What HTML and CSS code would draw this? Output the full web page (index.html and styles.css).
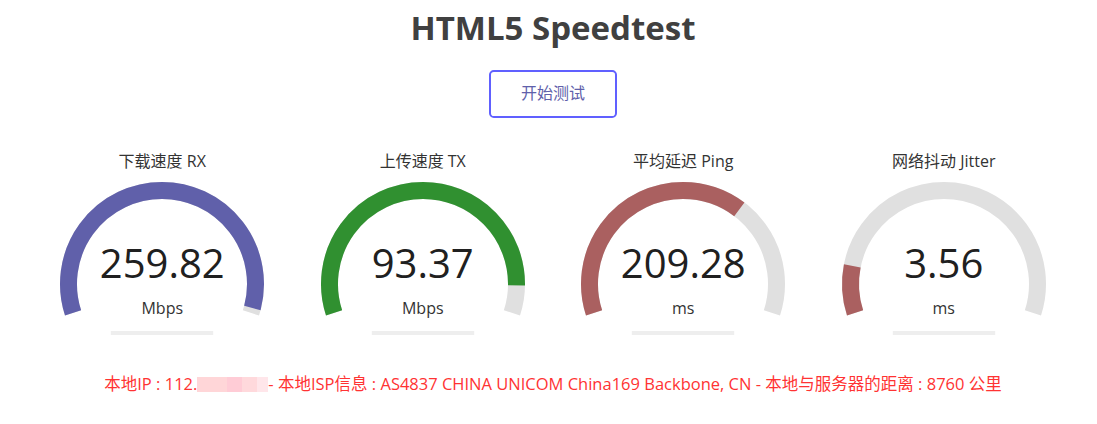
FILE: index.html
```html
<!DOCTYPE html>
<html>

<head>
    <meta charset="utf-8">
    <meta name="viewport" content="width=device-width">
    <title>HTML5 Speedtest</title>
    <link rel="stylesheet" href="styles.css">
</head>

<body>
    <div class="page">
        <h1>HTML5 Speedtest</h1>
        <div class="start-btn">开始测试</div>

        <div class="test-wrapper">

            <div class="test-area">
                <svg class="meter" viewBox="0 0 256 200">
                    <path class="meter-bk" d="M39.08 163.89 A93.5 93.5 0 1 1 216.92 163.89" />
                    <path class="meter-fg dl" pathLength="100" stroke-dasharray="98.5 200" d="M39.08 163.89 A93.5 93.5 0 1 1 216.92 163.89" />
                    <rect class="meter-prog" x="76.8" y="182" width="102.4" height="4" />
                </svg>
                <div class="test-name">下载速度 RX</div>
                <div class="meter-text">259.82</div>
                <div class="unit">Mbps</div>
            </div>

            <div class="test-area">
                <svg class="meter" viewBox="0 0 256 200">
                    <path class="meter-bk" d="M39.08 163.89 A93.5 93.5 0 1 1 216.92 163.89" />
                    <path class="meter-fg ul" pathLength="100" stroke-dasharray="92.08 200" d="M39.08 163.89 A93.5 93.5 0 1 1 216.92 163.89" />
                    <rect class="meter-prog" x="76.8" y="182" width="102.4" height="4" />
                </svg>
                <div class="test-name">上传速度 TX</div>
                <div class="meter-text">93.37</div>
                <div class="unit">Mbps</div>
            </div>

            <div class="test-area">
                <svg class="meter" viewBox="0 0 256 200">
                    <path class="meter-bk" d="M39.08 163.89 A93.5 93.5 0 1 1 216.92 163.89" />
                    <path class="meter-fg ping" pathLength="100" stroke-dasharray="67.16 200" d="M39.08 163.89 A93.5 93.5 0 1 1 216.92 163.89" />
                    <rect class="meter-prog" x="76.8" y="182" width="102.4" height="4" />
                </svg>
                <div class="test-name">平均延迟 Ping</div>
                <div class="meter-text">209.28</div>
                <div class="unit">ms</div>
            </div>

            <div class="test-area">
                <svg class="meter" viewBox="0 0 256 200">
                    <path class="meter-bk" d="M39.08 163.89 A93.5 93.5 0 1 1 216.92 163.89" />
                    <path class="meter-fg jit" pathLength="100" stroke-dasharray="13.5 200" d="M39.08 163.89 A93.5 93.5 0 1 1 216.92 163.89" />
                    <rect class="meter-prog" x="76.8" y="182" width="102.4" height="4" />
                </svg>
                <div class="test-name">网络抖动 Jitter</div>
                <div class="meter-text">3.56</div>
                <div class="unit">ms</div>
            </div>

        </div>

        <div class="ip-area">本地IP : 112.<span class="masked"></span>- 本地ISP信息 : AS4837 CHINA UNICOM China169 Backbone, CN - 本地与服务器的距离 : 8760 公里</div>
    </div>
</body>

</html>
```

FILE: styles.css
```css
html,
body {
    margin: 0;
    padding: 0;
    background: #ffffff;
}

body {
    font-family: "Open Sans", "Noto Sans CJK SC", sans-serif;
    font-size: 16px;
    color: #202020;
}

.page {
    padding-left: 9px;
    text-align: center;
}

h1 {
    margin: 0;
    padding-top: 6px;
    height: 64px;
    box-sizing: border-box;
    font-size: 33px;
    line-height: 44px;
    font-weight: 700;
    color: #404040;
}

.start-btn {
    display: inline-block;
    box-sizing: border-box;
    width: 8em;
    height: 3em;
    line-height: 2.7em;
    margin-top: 6px;
    color: #6060AA;
    border: 0.15em solid #6060FF;
    border-radius: 0.3em;
}

.test-wrapper {
    display: flex;
    justify-content: center;
    gap: 4.5px;
    margin-top: 31px;
}

.test-area {
    position: relative;
    width: 256px;
    height: 200px;
    display: flex;
    flex-direction: column;
    align-items: center;
}

.meter {
    position: absolute;
    top: 0;
    left: 0;
    width: 256px;
    height: 200px;
}

.meter-bk,
.meter-fg {
    fill: none;
    stroke-width: 17;
    stroke-linecap: butt;
}

.meter-bk {
    stroke: #E0E0E0;
}

.meter-fg.dl {
    stroke: #6060AA;
}

.meter-fg.ul {
    stroke: #309030;
}

.meter-fg.ping,
.meter-fg.jit {
    stroke: #AA6060;
}

.meter-prog {
    fill: #EEEEEE;
}

.test-name {
    position: relative;
    margin-top: 0;
    line-height: 24px;
    font-size: 16px;
    color: #333333;
}

.meter-text {
    position: relative;
    margin-top: 66px;
    line-height: 48px;
    font-size: 40px;
    color: #202020;
}

.unit {
    position: relative;
    margin-top: 9px;
    line-height: 24px;
    font-size: 16px;
    color: #333333;
}

.ip-area {
    margin-top: 24px;
    font-size: 16.5px;
    line-height: 22px;
    color: #ff3333;
}

.masked {
    display: inline-block;
    width: 71px;
    height: 15px;
    vertical-align: -2px;
    background: linear-gradient(to right, #ffd6d8 0, #ffd6d8 30px, #ffccd6 30px, #ffccd6 45px, #ffd9dc 45px, #ffd9dc 60px, #ffe6ea 60px);
}
```
